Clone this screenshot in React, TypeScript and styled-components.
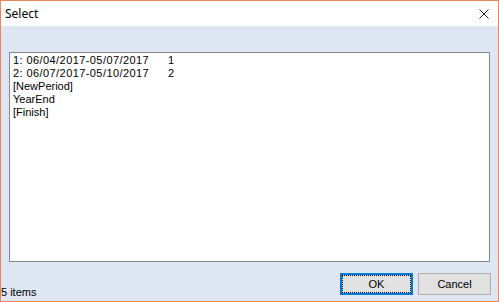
import styled, { createGlobalStyle } from "styled-components";

const GlobalStyle = createGlobalStyle`
  html, body {
    margin: 0;
    padding: 0;
    background: #ffffff;
  }
`;

const Window = styled.div`
  width: 499px;
  height: 302px;
  box-sizing: border-box;
  border: 1px solid #e8875a;
  display: flex;
  flex-direction: column;
  font-family: "Liberation Sans", Arial, sans-serif;
  font-size: 11px;
  color: #000;
`;

const TitleBar = styled.div`
  height: 25px;
  flex: none;
  display: flex;
  align-items: center;
  justify-content: space-between;
  background: #ffffff;
  padding-left: 4px;
`;

const Title = styled.span`
  font-family: "Noto Sans", "Open Sans", sans-serif;
  font-size: 12px;
`;

const CloseButton = styled.div`
  width: 29px;
  height: 25px;
  display: flex;
  align-items: center;
  justify-content: center;
`;

const Client = styled.div`
  flex: 1;
  display: flex;
  flex-direction: column;
  background: #dfe7f4;
  padding-top: 26px;
`;

const ListBox = styled.div`
  height: 210px;
  margin: 0 8px;
  box-sizing: border-box;
  border: 1px solid #828790;
  background: #ffffff;
  padding: 1px 3px;
`;

const Row = styled.div`
  display: grid;
  grid-template-columns: 155px auto;
  height: 13px;
  line-height: 13px;
  white-space: nowrap;
`;

const Cell = styled.span<{ wide?: boolean }>`
  letter-spacing: ${(p) => (p.wide ? "0.42px" : "0")};
`;

const Footer = styled.div`
  flex: 1;
  display: flex;
`;

const Status = styled.span`
  align-self: flex-end;
  line-height: 13px;
  padding-bottom: 2px;
`;

const Buttons = styled.div`
  margin-left: auto;
  margin-top: 11px;
  padding-right: 7px;
  display: flex;
  gap: 5px;
  align-self: flex-start;
`;

const Button = styled.button<{ primary?: boolean }>`
  width: 73px;
  height: 22px;
  box-sizing: border-box;
  padding: 0;
  background: #e1e1e1;
  font-family: "Liberation Sans", Arial, sans-serif;
  font-size: 11px;
  color: #000;
  border: ${(p) => (p.primary ? "2px solid #0078d7" : "1px solid #adadad")};
  outline: ${(p) => (p.primary ? "1px dotted #000" : "none")};
  outline-offset: -3px;
`;

const rows = [
  { name: "1: 06/04/2017-05/07/2017", value: "1", wide: true },
  { name: "2: 06/07/2017-05/10/2017", value: "2", wide: true },
  { name: "[NewPeriod]", value: "" },
  { name: "YearEnd", value: "" },
  { name: "[Finish]", value: "" },
];

export default function App() {
  return (
    <>
      <GlobalStyle />
      <Window>
        <TitleBar>
          <Title>Select</Title>
          <CloseButton>
            <svg width="10" height="10" viewBox="0 0 10 10">
              <path d="M0.5 0.5 L9.5 9.5 M9.5 0.5 L0.5 9.5" stroke="#000" strokeWidth="0.9" />
            </svg>
          </CloseButton>
        </TitleBar>
        <Client>
          <ListBox>
            {rows.map((r) => (
              <Row key={r.name}>
                <Cell wide={r.wide}>{r.name}</Cell>
                <Cell>{r.value}</Cell>
              </Row>
            ))}
          </ListBox>
          <Footer>
            <Status>5 items</Status>
            <Buttons>
              <Button primary>OK</Button>
              <Button>Cancel</Button>
            </Buttons>
          </Footer>
        </Client>
      </Window>
    </>
  );
}
